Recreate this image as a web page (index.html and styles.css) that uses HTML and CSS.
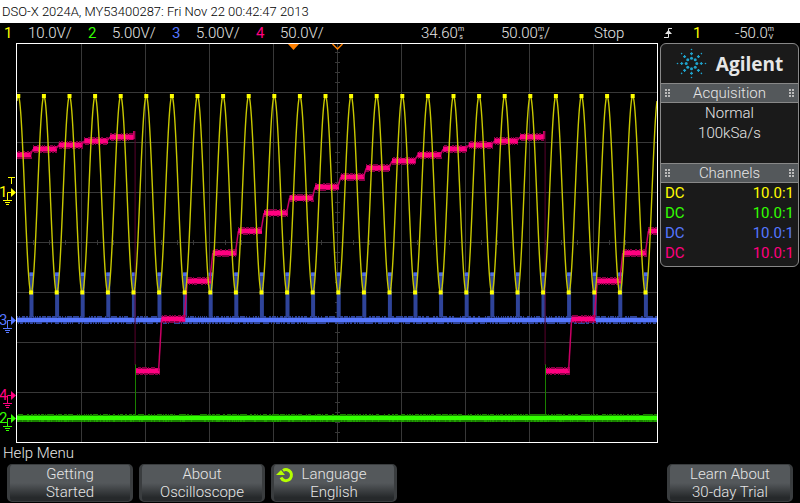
FILE: index.html
```
<!DOCTYPE html>
<html lang="en">
<head>
  <meta charset="UTF-8">
  <meta name="viewport" content="width=device-width, initial-scale=1.0">
  <title>DSO-X 2024A</title>
  <link rel="stylesheet" href="styles.css">
</head>
<body>
<header class="title">DSO-X 2024A, MY53400287: Fri Nov 22 00:42:47 2013</header>

<div class="status">
  <div class="channel"><span class="num ch1">1</span>10.0V/</div>
  <div class="channel"><span class="num ch2">2</span>5.00V/</div>
  <div class="channel"><span class="num ch3">3</span>5.00V/</div>
  <div class="channel"><span class="num ch4">4</span>50.0V/</div>
  <div class="reading">34.60<span class="unit"><span>m</span><span>s</span></span></div>
  <div class="reading">50.00<span class="unit"><span>m</span><span>s</span></span>/</div>
  <div class="run">Stop</div>
  <svg class="edge" viewBox="0 0 8 12" width="8" height="12">
    <path d="M0 10.5H4.5V1.5H8" fill="none" stroke="#e6e6e6" stroke-width="1"/>
    <path d="M4.500 3L8 7H1Z" fill="#e6e6e6"/>
  </svg>
  <span class="source ch1">1</span>
  <div class="reading">-50.0<span class="unit"><span>m</span><span>V</span></span></div>
</div>

<main class="main">
  <svg class="scope" viewBox="0 43 658 400">
    <g id="grid"></g>
    <g id="traces"></g>
    <rect x="16.5" y="43.5" width="641" height="399" fill="none" stroke="#fff"/>
    <path d="M288 44H299L293.500 50Z" fill="#ff8000"/>
    <path d="M332.500 44L337.500 49L342.500 44" fill="none" stroke="#ff8000" stroke-width="1.500"/>
    <path d="M8 177.500H15M11.500 177V184" stroke="#ffff00" fill="none"/>
    <g id="markers"></g>
  </svg>

  <aside class="panel">
    <div class="brand">
      <svg id="logo" viewBox="0 0 31 31" width="31" height="31"></svg>
      <span>Agilent</span>
    </div>
    <h2><i class="grip"></i>Acquisition<i class="grip"></i></h2>
    <div class="acquisition">
      <p>Normal</p>
      <p>100kSa/s</p>
    </div>
    <h2><i class="grip"></i>Channels<i class="grip"></i></h2>
    <table class="channels">
      <tr class="ch1"><td>DC</td><td>10.0:1</td></tr>
      <tr class="ch2"><td>DC</td><td>10.0:1</td></tr>
      <tr class="ch3"><td>DC</td><td>10.0:1</td></tr>
      <tr class="ch4"><td>DC</td><td>10.0:1</td></tr>
    </table>
  </aside>
</main>

<div class="menu-title">Help Menu</div>
<nav class="softkeys">
  <button type="button">Getting<br>Started</button>
  <button type="button">About<br>Oscilloscope</button>
  <button type="button">
    <svg class="knob" viewBox="0 0 18 16" width="18" height="16">
      <path d="M5 10.500A5.500 5.500 0 1 0 7 3.500" fill="none" stroke="#b4ff00" stroke-width="3"/>
      <path d="M0 8L5 3L9 8Z" fill="#b4ff00"/>
    </svg>
    Language<br>English
  </button>
  <button type="button" class="last">Learn About<br>30-day Trial</button>
</nav>

<script src="scope.js"></script>
</body>
</html>
```

FILE: styles.css
```
* {
  margin: 0;
  padding: 0;
  box-sizing: border-box;
}
body {
  background-color: #000;
  color: #e6e6e6;
  font-family: Roboto, "Liberation Sans", sans-serif;
  font-weight: 300;
  font-size: 15px;
  line-height: 20px;
}
.title {
  background-color: #fff;
  color: #000;
  font-size: 13px;
  line-height: 23px;
  padding-left: 2px;
  white-space: nowrap;
}
.ch1 {
  color: #ffff00;
}
.ch2 {
  color: #33ff00;
}
.ch3 {
  color: #5577ff;
}
.ch4 {
  color: #ff0080;
}
.status {
  display: grid;
  grid-template-columns: repeat(3, 84fr) 165fr 80fr 93fr 70fr 29fr 42fr 65fr;
  align-items: center;
  height: 20px;
  line-height: 18px;
  padding-left: 4px;
  white-space: nowrap;
}
.channel,
.reading {
  display: flex;
  align-items: center;
}
.num {
  width: 24px;
}
.num,
.source,
.channels {
  font-weight: 400;
}
.unit {
  display: flex;
  flex-direction: column;
  font-size: 7px;
  font-weight: 400;
  line-height: 8px;
  text-align: center;
}
.main {
  display: grid;
  grid-template-columns: 658fr 139fr;
  align-items: start;
  gap: 2px;
  padding-right: 1px;
}
.scope {
  display: block;
  width: 100%;
}
.scope text {
  font-size: 15px;
  font-weight: 400;
}
.panel {
  background-color: #1a1a1a;
  border: 1px solid #888;
  border-radius: 6px;
  text-align: center;
  overflow: hidden;
}
.brand {
  display: flex;
  align-items: center;
  justify-content: center;
  gap: 9px;
  height: 39px;
  font-family: "Open Sans", "Noto Sans", sans-serif;
  font-weight: 700;
  font-size: 19px;
}
.panel h2 {
  display: flex;
  align-items: center;
  justify-content: space-between;
  height: 20px;
  padding: 0 4px;
  background-color: #54585b;
  border-top: 1px solid #888;
  border-bottom: 1px solid #888;
  font-size: 15px;
  font-weight: 300;
}
.grip {
  width: 5px;
  height: 8px;
  background-image: radial-gradient(circle at 1px 1px, #bbb 1px, transparent 1px);
  background-size: 3px 3px;
}
.acquisition {
  height: 60px;
}
.channels {
  width: 100%;
  border-collapse: collapse;
  margin-bottom: 3px;
}
.channels td {
  height: 20px;
  padding: 0 4px;
  text-align: left;
}
.channels td:last-child {
  text-align: right;
}
.menu-title {
  padding: 0 3px;
  line-height: 21px;
}
.softkeys {
  display: grid;
  grid-template-columns: repeat(6, 1fr);
  gap: 6px;
  padding: 0 7px;
}
.softkeys button {
  position: relative;
  height: 38px;
  color: #e6e6e6;
  font: inherit;
  line-height: 18px;
  background: linear-gradient(#54585b 50%, #26292b 90%);
  border: 1px solid #3a3d3f;
  border-width: 1px 3px;
  border-radius: 5px;
  white-space: nowrap;
}
.softkeys .last {
  grid-column: 6;
}
.knob {
  position: absolute;
  left: 2px;
  top: 2px;
}
```

FILE: scope.js
```
const NS = 'http://www.w3.org/2000/svg';
const PERIOD = 25.6;

function add(parent, name, attrs) {
  const el = document.createElementNS(NS, name);
  for (const key in attrs) {
    el.setAttribute(key, attrs[key]);
  }
  parent.appendChild(el);
  return el;
}

function path(parent, d, stroke, width) {
  return add(parent, 'path', { d: d, stroke: stroke, 'stroke-width': width, fill: 'none' });
}

// graticule
const grid = document.getElementById('grid');
let d = '';
for (let x = 81; x < 657; x += 64) d += `M${x + 0.5} 44V442`;
for (let y = 92; y < 442; y += 50) d += `M17 ${y + 0.5}H657`;
for (let x = 33; x < 657; x += 16) d += `M${x + 0.5} 240V245`;
for (let y = 52; y < 442; y += 10) d += `M335 ${y + 0.5}H340`;
path(grid, d, '#383838', 1);

const traces = document.getElementById('traces');

// short marks along a flat line, so its edges look noisy
function fringe(x1, x2, top, bottom, color) {
  let marks = '';
  for (let x = Math.round(x1); x < x2; x++) {
    const n = Math.abs(Math.sin(x * 12.9898 + top) * 43758.5453) % 1;
    if (n < 0.6) marks += `M${x + 0.5} ${top}V${top + 2}`;
    if (n > 0.35) marks += `M${x + 0.5} ${bottom - 2}V${bottom}`;
  }
  path(traces, marks, color, 1);
}

// channel 3: baseline and pulses
for (let x = 31.5; x < 657; x += PERIOD) {
  path(traces, `M${x} 272V317`, '#2f449a', 4);
  path(traces, `M${x} 273V276`, '#4a6ae8', 4);
}
path(traces, 'M17 320H657', '#3a54bb', 5);
path(traces, 'M17 320H657', '#5577ff', 4);
fringe(17, 657, 316, 324, '#2f449a');

// channel 2: flat line
path(traces, 'M17 418.5H657', '#1fa000', 7);
path(traces, 'M17 418H657', '#33ff00', 4);
fringe(17, 657, 414, 422, '#1a8000');
path(traces, 'M135.5 364V415M545.5 364V415', '#1a8000', 1);

// channel 4: staircase
const levels = [371, 319, 281, 253, 231, 213, 198, 187, 177, 168, 161, 155, 149, 145, 141, 137];
function staircase(start) {
  levels.forEach((y, i) => {
    const x1 = Math.max(start + i * PERIOD, 17);
    const x2 = Math.min(start + (i + 1) * PERIOD - 2, 657);
    if (x2 <= 17 || x1 >= 657) return;
    path(traces, `M${x1} ${y}H${x2}`, '#d8006c', 6);
    path(traces, `M${x1} ${y}H${x2}`, '#ff0080', 4);
    fringe(x1, x2, y - 4, y + 4, '#8a0045');
    if (i < 15 && x2 < 657) {
      path(traces, `M${x2 - 1} ${y}L${x2 + 2} ${levels[i + 1]}`, '#c80064', 1.5);
    }
    if (i === 15) {
      path(traces, `M${x2 + 0.5} ${y + 2}V131`, '#d8006c', 2);
      path(traces, `M${x2 + 1.5} 131V365`, '#5a002d', 1);
    }
  });
}
staircase(-274);
staircase(136);
staircase(546);

// channel 1: sine
d = 'M';
for (let x = 17; x <= 657; x += 0.4) {
  const y = 194.5 - 98.5 * Math.cos((x - 18.3) / PERIOD * 2 * Math.PI);
  d += `${x.toFixed(1)} ${y.toFixed(1)} `;
}
path(traces, d, '#c8c800', 1.4);
d = '';
for (let x = 18.3; x < 657; x += PERIOD) {
  d += `M${Math.max(x - 2, 17)} 96H${x + 2}`;
  if (x + 15 < 657) d += `M${x + 10.8} 292.5H${x + 14.8}`;
}
path(traces, d, '#ffff00', 4);

// ground markers in the left gutter
const markers = document.getElementById('markers');
[
  ['1', 192, '#ffff00'],
  ['3', 320, '#5577ff'],
  ['4', 395, '#ff0080'],
  ['2', 418, '#33ff00']
].forEach(([label, y, color]) => {
  const t = add(markers, 'text', { x: -1, y: y + 5, fill: color });
  t.textContent = label;
  path(markers, `M12 ${y + 0.5}H7.5V${y + 8}M3 ${y + 8.5}H12M5 ${y + 10.5}H10M6 ${y + 12.5}H9`, color, 1);
  add(markers, 'path', { d: `M11 ${y - 4}L16 ${y + 0.5}L11 ${y + 5}Z`, fill: color });
});

// starburst logo: eight rays, a drop, a plus and a dot on each
const logo = document.getElementById('logo');
for (let i = 0; i < 8; i++) {
  const a = i * Math.PI / 4;
  const at = r => [15.5 + r * Math.cos(a), 15.5 + r * Math.sin(a)];
  const [ix, iy] = at(5.3);
  const [mx, my] = at(9.8);
  const [ox, oy] = at(14);
  add(logo, 'circle', { cx: ix, cy: iy, r: 1.5, fill: '#1fa3cc' });
  path(logo, `M${mx - 1.5} ${my}h3M${mx} ${my - 1.5}v3`, '#1fa3cc', 1.2);
  add(logo, 'circle', { cx: ox, cy: oy, r: 0.8, fill: '#1fa3cc' });
}
```
